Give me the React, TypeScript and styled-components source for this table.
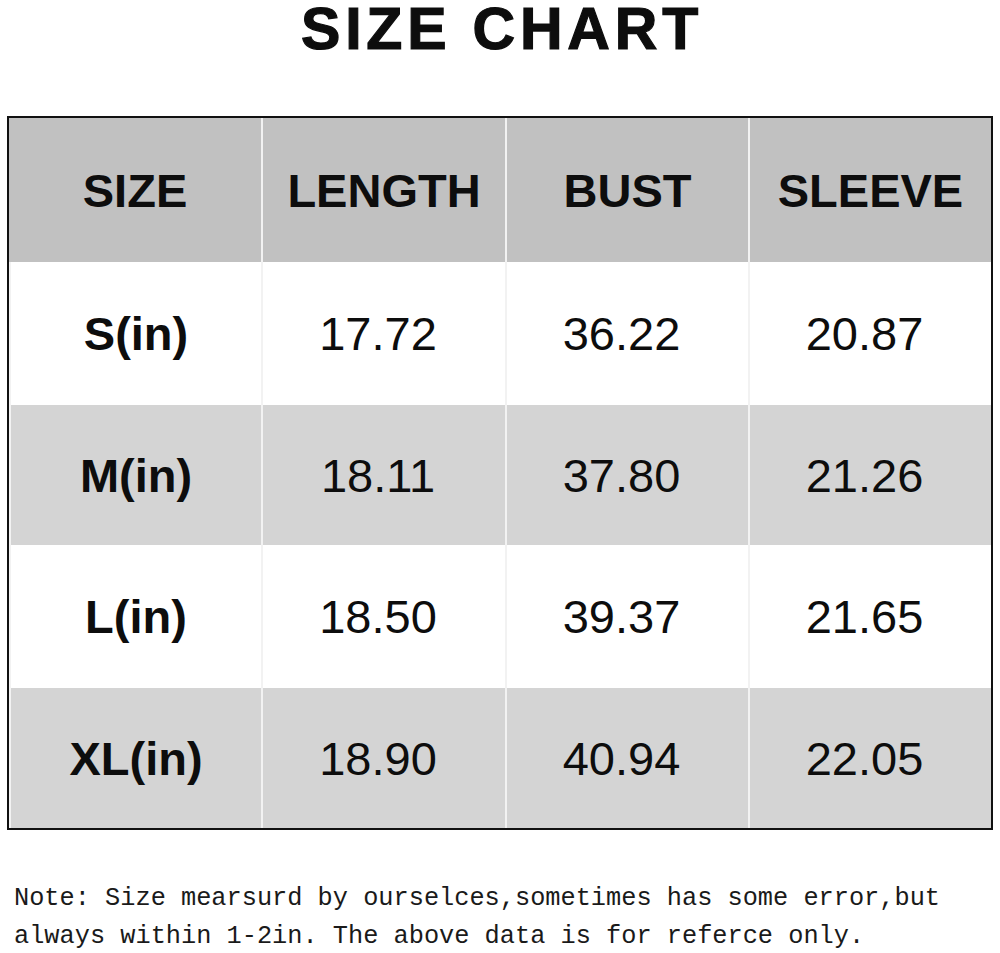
import React from "react";
import styled, { createGlobalStyle } from "styled-components";

const GlobalStyle = createGlobalStyle`
  html, body {
    margin: 0;
    padding: 0;
    background: #fff;
  }
`;

const Page = styled.div`
  width: 1000px;
  min-height: 953px;
  display: flex;
  flex-direction: column;
  align-items: center;
  font-family: "Liberation Sans", Arial, sans-serif;
  color: #0d0d0d;

  & > * {
    flex-shrink: 0;
  }
`;

const Title = styled.h1`
  margin: 0;
  height: 116px;
  font-size: 59px;
  line-height: 58px;
  font-weight: 700;
  letter-spacing: 4.8px;
  -webkit-text-stroke: 1.2px #0d0d0d;
  padding-left: 4px;
`;

const Table = styled.div`
  width: 982px;
  border: 2px solid #111;
  display: grid;
  grid-template-columns: 252px 244px 243px 243px;
`;

const Cell = styled.div<{ $bg: string; $bold?: boolean; $num?: boolean; $h: number }>`
  height: ${(p) => p.$h}px;
  background: ${(p) => p.$bg};
  display: flex;
  align-items: center;
  justify-content: center;
  padding-right: ${(p) => (p.$num ? 12 : 0)}px;
  font-size: 47px;
  font-weight: ${(p) => (p.$bold ? 700 : 400)};
  box-sizing: border-box;

  & + & {
    border-left: 2px solid #f2f2f2;
  }
`;

const Note = styled.div`
  align-self: stretch;
  margin-top: 50px;
  padding-left: 14px;
  font-family: "Liberation Mono", "Courier New", monospace;
  font-size: 25.3px;
  line-height: 38px;
  color: #1a1a1a;
  white-space: pre;
`;

const header = ["SIZE", "LENGTH", "BUST", "SLEEVE"];

const rows = [
  ["S(in)", "17.72", "36.22", "20.87"],
  ["M(in)", "18.11", "37.80", "21.26"],
  ["L(in)", "18.50", "39.37", "21.65"],
  ["XL(in)", "18.90", "40.94", "22.05"],
];

const rowHeights = [143, 140, 143, 140];

export default function App() {
  return (
    <Page>
      <GlobalStyle />
      <Title>SIZE CHART</Title>
      <Table>
        {header.map((h) => (
          <Cell key={h} $bg="#c1c1c1" $bold $h={144}>
            {h}
          </Cell>
        ))}
        {rows.map((r, i) =>
          r.map((v, j) => (
            <Cell
              key={`${i}-${j}`}
              $bg={i % 2 === 0 ? "#ffffff" : "#d4d4d4"}
              $bold={j === 0}
              $num={j > 0}
              $h={rowHeights[i]}
            >
              {v}
            </Cell>
          ))
        )}
      </Table>
      <Note>
        {"Note: Size mearsurd by ourselces,sometimes has some error,but\nalways within 1-2in. The above data is for referce only."}
      </Note>
    </Page>
  );
}
